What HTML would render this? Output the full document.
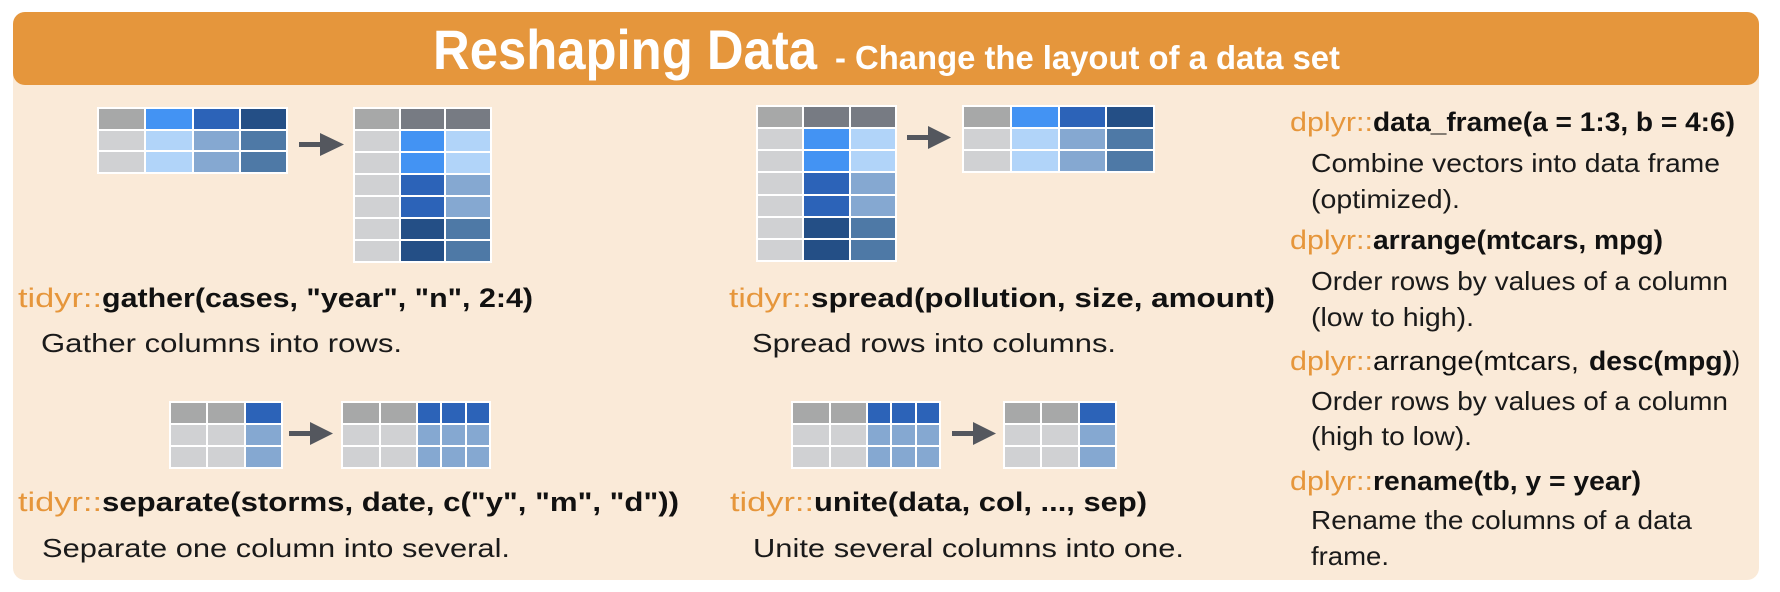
<!DOCTYPE html>
<html><head><meta charset="utf-8">
<style>
html,body{margin:0;padding:0;background:#fff;}
#wrap{position:relative;width:1780px;height:592px;overflow:hidden;background:#fff;}
.panel{position:absolute;left:13px;top:12px;width:1746px;height:568px;background:#FAEAD8;border-radius:12px;}
.hdr{position:absolute;left:13px;top:12px;width:1746px;height:73px;background:#E5963C;border-radius:12px;}
.t{position:absolute;display:grid;gap:2px;padding:2px;background:#fff;box-sizing:border-box;}
.G{background:#A7A8A8}.D{background:#777B83}.L{background:#D0D1D3}
.B1{background:#4393F3}.B2{background:#2C63B8}.B3{background:#244F86}
.C1{background:#B1D4F9}.C2{background:#85A8D1}.C3{background:#4E79A6}
svg{position:absolute;left:0;top:0;}
</style></head><body><div id="wrap">
<div class="panel"></div>
<div class="hdr"></div>

<div class="t" style="left:97px;top:107px;width:191px;height:67px;grid-template-columns:repeat(4,1fr);grid-template-rows:repeat(3,1fr);">
<div class="G"></div><div class="B1"></div><div class="B2"></div><div class="B3"></div>
<div class="L"></div><div class="C1"></div><div class="C2"></div><div class="C3"></div>
<div class="L"></div><div class="C1"></div><div class="C2"></div><div class="C3"></div>
</div>
<div class="t" style="left:353px;top:107px;width:139px;height:156px;grid-template-columns:repeat(3,1fr);grid-template-rows:repeat(7,1fr);">
<div class="G"></div><div class="D"></div><div class="D"></div>
<div class="L"></div><div class="B1"></div><div class="C1"></div>
<div class="L"></div><div class="B1"></div><div class="C1"></div>
<div class="L"></div><div class="B2"></div><div class="C2"></div>
<div class="L"></div><div class="B2"></div><div class="C2"></div>
<div class="L"></div><div class="B3"></div><div class="C3"></div>
<div class="L"></div><div class="B3"></div><div class="C3"></div>
</div>
<div class="t" style="left:756px;top:105px;width:141px;height:157px;grid-template-columns:repeat(3,1fr);grid-template-rows:repeat(7,1fr);">
<div class="G"></div><div class="D"></div><div class="D"></div>
<div class="L"></div><div class="B1"></div><div class="C1"></div>
<div class="L"></div><div class="B1"></div><div class="C1"></div>
<div class="L"></div><div class="B2"></div><div class="C2"></div>
<div class="L"></div><div class="B2"></div><div class="C2"></div>
<div class="L"></div><div class="B3"></div><div class="C3"></div>
<div class="L"></div><div class="B3"></div><div class="C3"></div>
</div>
<div class="t" style="left:962px;top:105px;width:193px;height:68px;grid-template-columns:repeat(4,1fr);grid-template-rows:repeat(3,1fr);">
<div class="G"></div><div class="B1"></div><div class="B2"></div><div class="B3"></div>
<div class="L"></div><div class="C1"></div><div class="C2"></div><div class="C3"></div>
<div class="L"></div><div class="C1"></div><div class="C2"></div><div class="C3"></div>
</div>
<div class="t" style="left:169px;top:401px;width:114px;height:68px;grid-template-columns:repeat(3,1fr);grid-template-rows:repeat(3,1fr);">
<div class="G"></div><div class="G"></div><div class="B2"></div>
<div class="L"></div><div class="L"></div><div class="C2"></div>
<div class="L"></div><div class="L"></div><div class="C2"></div>
</div>
<div class="t" style="left:341px;top:401px;width:150px;height:68px;grid-template-columns:35fr 35fr 22fr 22fr 22fr;grid-template-rows:repeat(3,1fr);">
<div class="G"></div><div class="G"></div><div class="B2"></div><div class="B2"></div><div class="B2"></div>
<div class="L"></div><div class="L"></div><div class="C2"></div><div class="C2"></div><div class="C2"></div>
<div class="L"></div><div class="L"></div><div class="C2"></div><div class="C2"></div><div class="C2"></div>
</div>
<div class="t" style="left:791px;top:401px;width:150px;height:68px;grid-template-columns:35fr 35fr 22fr 22fr 22fr;grid-template-rows:repeat(3,1fr);">
<div class="G"></div><div class="G"></div><div class="B2"></div><div class="B2"></div><div class="B2"></div>
<div class="L"></div><div class="L"></div><div class="C2"></div><div class="C2"></div><div class="C2"></div>
<div class="L"></div><div class="L"></div><div class="C2"></div><div class="C2"></div><div class="C2"></div>
</div>
<div class="t" style="left:1003px;top:401px;width:114px;height:68px;grid-template-columns:repeat(3,1fr);grid-template-rows:repeat(3,1fr);">
<div class="G"></div><div class="G"></div><div class="B2"></div>
<div class="L"></div><div class="L"></div><div class="C2"></div>
<div class="L"></div><div class="L"></div><div class="C2"></div>
</div>

<svg width="1780" height="592" viewBox="0 0 1780 592" xmlns="http://www.w3.org/2000/svg">
<g fill="#54575E">
<rect x="299" y="142" width="24" height="5"/><polygon points="320,133 344,144.5 320,156"/>
<rect x="907" y="135" width="24" height="5"/><polygon points="928,126 951,137.5 928,149"/>
<rect x="289" y="431" width="24" height="5"/><polygon points="310,422 333,433.5 310,445"/>
<rect x="952" y="431" width="24" height="5"/><polygon points="973,422 996,433.5 973,445"/>
</g>
<g font-family="Liberation Sans, sans-serif" font-weight="bold" fill="#fff">
<text x="433" y="69" font-size="56" textLength="384" lengthAdjust="spacingAndGlyphs">Reshaping Data</text>
<text x="835" y="69" font-size="33" textLength="505" lengthAdjust="spacingAndGlyphs">- Change the layout of a data set</text>
</g>
<g font-family="Liberation Sans, sans-serif" font-size="27">
<g fill="#E6963B">
<text x="18" y="307" textLength="84" lengthAdjust="spacingAndGlyphs">tidyr::</text>
<text x="729" y="307" textLength="82" lengthAdjust="spacingAndGlyphs">tidyr::</text>
<text x="18" y="511" textLength="84" lengthAdjust="spacingAndGlyphs">tidyr::</text>
<text x="730" y="511" textLength="84" lengthAdjust="spacingAndGlyphs">tidyr::</text>
<text x="1290" y="131" textLength="83" lengthAdjust="spacingAndGlyphs">dplyr::</text>
<text x="1290" y="249" textLength="83" lengthAdjust="spacingAndGlyphs">dplyr::</text>
<text x="1290" y="370" textLength="83" lengthAdjust="spacingAndGlyphs">dplyr::</text>
<text x="1290" y="490" textLength="83" lengthAdjust="spacingAndGlyphs">dplyr::</text>
</g>
<g fill="#111" font-weight="bold">
<text x="102" y="307" textLength="431" lengthAdjust="spacingAndGlyphs">gather(cases, "year", "n", 2:4)</text>
<text x="811" y="307" textLength="464" lengthAdjust="spacingAndGlyphs">spread(pollution, size, amount)</text>
<text x="102" y="511" textLength="577" lengthAdjust="spacingAndGlyphs">separate(storms, date, c("y", "m", "d"))</text>
<text x="814" y="511" textLength="333" lengthAdjust="spacingAndGlyphs">unite(data, col, ..., sep)</text>
<text x="1373" y="131" textLength="362" lengthAdjust="spacingAndGlyphs">data_frame(a = 1:3, b = 4:6)</text>
<text x="1373" y="249" textLength="290" lengthAdjust="spacingAndGlyphs">arrange(mtcars, mpg)</text>
<text x="1373" y="370" textLength="206" lengthAdjust="spacingAndGlyphs" font-weight="normal">arrange(mtcars,</text>
<text x="1589" y="370" textLength="143" lengthAdjust="spacingAndGlyphs">desc(mpg)</text>
<text x="1732" y="370" textLength="8" lengthAdjust="spacingAndGlyphs" font-weight="normal">)</text>
<text x="1373" y="490" textLength="268" lengthAdjust="spacingAndGlyphs">rename(tb, y = year)</text>
</g>
<g fill="#1a1a1a" font-size="26">
<text x="41" y="352" textLength="361" lengthAdjust="spacingAndGlyphs">Gather columns into rows.</text>
<text x="752" y="352" textLength="364" lengthAdjust="spacingAndGlyphs">Spread rows into columns.</text>
<text x="42" y="557" textLength="468" lengthAdjust="spacingAndGlyphs">Separate one column into several.</text>
<text x="753" y="557" textLength="431" lengthAdjust="spacingAndGlyphs">Unite several columns into one.</text>
<text x="1311" y="172" textLength="409" lengthAdjust="spacingAndGlyphs">Combine vectors into data frame</text>
<text x="1311" y="208" textLength="149" lengthAdjust="spacingAndGlyphs">(optimized).</text>
<text x="1311" y="290" textLength="417" lengthAdjust="spacingAndGlyphs">Order rows by values of a column</text>
<text x="1311" y="326" textLength="163" lengthAdjust="spacingAndGlyphs">(low to high).</text>
<text x="1311" y="410" textLength="417" lengthAdjust="spacingAndGlyphs">Order rows by values of a column</text>
<text x="1311" y="445" textLength="161" lengthAdjust="spacingAndGlyphs">(high to low).</text>
<text x="1311" y="529" textLength="381" lengthAdjust="spacingAndGlyphs">Rename the columns of a data</text>
<text x="1311" y="565" textLength="78" lengthAdjust="spacingAndGlyphs">frame.</text>
</g>
</g>
</svg>
</div></body></html>
